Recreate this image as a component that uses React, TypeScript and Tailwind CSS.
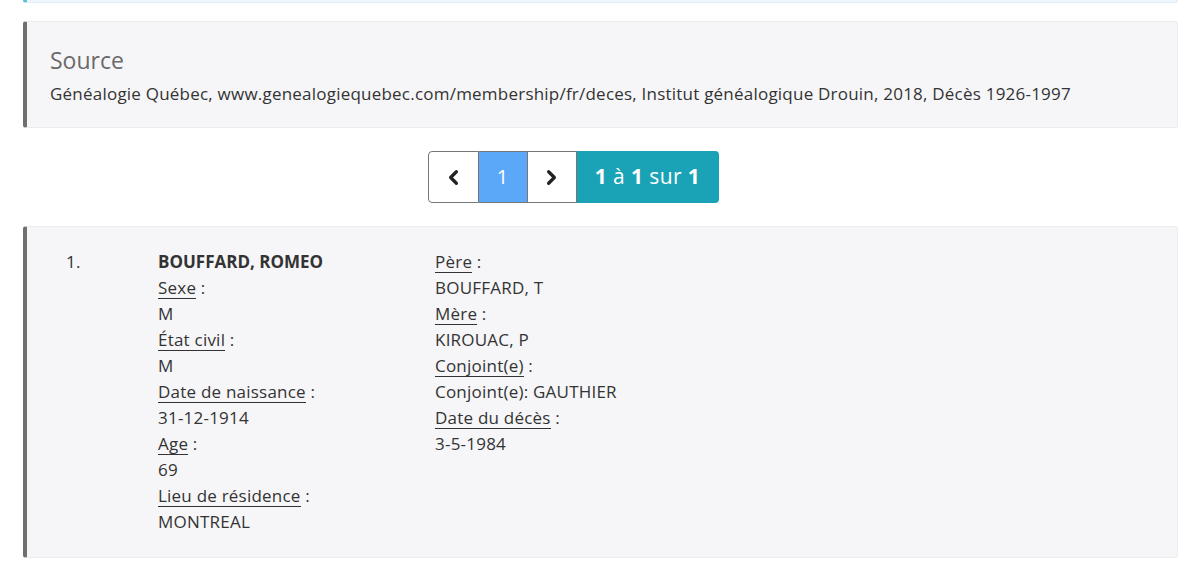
import { ChevronLeft, ChevronRight } from "lucide-react";

type Field = { label: string; value: string };

const leftFields: Field[] = [
  { label: "Sexe", value: "M" },
  { label: "État civil", value: "M" },
  { label: "Date de naissance", value: "31-12-1914" },
  { label: "Age", value: "69" },
  { label: "Lieu de résidence", value: "MONTREAL" },
];

const rightFields: Field[] = [
  { label: "Père", value: "BOUFFARD, T" },
  { label: "Mère", value: "KIROUAC, P" },
  { label: "Conjoint(e)", value: "Conjoint(e): GAUTHIER" },
  { label: "Date du décès", value: "3-5-1984" },
];

function FieldList({ fields }: { fields: Field[] }) {
  return (
    <>
      {fields.map((f) => (
        <div key={f.label}>
          <div>
            <abbr className="no-underline border-b border-[#333] leading-[21px] inline-block">{f.label}</abbr> :
          </div>
          <div>{f.value}</div>
        </div>
      ))}
    </>
  );
}

export default function App() {
  return (
    <div className="bg-white min-h-[563px] font-['Open_Sans',sans-serif] text-[17px] tracking-[0.22px] text-[#333] overflow-hidden">
      <div className="mx-[23px] w-[1155px]">
        {/* previous notice, cut off above */}
        <div className="h-[4px] -mt-px bg-[#eef6fb] border-l-4 border-[#5bc0de] border-b border-r border-b-[#e1eef6] border-r-[#e1eef6] rounded-b-[3px]" />

        <div className="mt-[18px] bg-[#f6f6f8] border border-[#ececee] border-l-4 border-l-[#6f6f6f] rounded-[3px] pl-[23px] pt-[24px] pb-[21px]">
          <h4 className="text-[23px] leading-[29px] tracking-normal text-[#6a6a6a] mb-[6px]">Source</h4>
          <p className="leading-[25px]">
            Généalogie Québec, www.genealogiequebec.com/membership/fr/deces, Institut généalogique Drouin, 2018, Décès 1926-1997
          </p>
        </div>

        <div className="flex justify-center mt-[23px] pr-[55px]">
          <div className="flex h-[52px]">
            <button className="w-[51px] flex items-center justify-center bg-white border border-[#767676] rounded-l-[4px] text-[#222]">
              <ChevronLeft size={23} strokeWidth={3.4} />
            </button>
            <span className="w-[48px] flex items-center justify-center bg-[#5ca8f8] border-y border-[#767676] text-white text-[20px]">
              1
            </span>
            <button className="w-[50px] flex items-center justify-center bg-white border border-[#767676] text-[#222]">
              <ChevronRight size={23} strokeWidth={3.4} />
            </button>
            <span className="w-[142px] flex items-center justify-center bg-[#1aa3b6] rounded-r-[4px] text-white text-[21px] tracking-[0.4px]">
              <b className="font-bold">1</b>&nbsp;à&nbsp;<b className="font-bold">1</b>&nbsp;sur&nbsp;<b className="font-bold">1</b>
            </span>
          </div>
        </div>

        <div className="mt-[23px] bg-[#f6f6f8] border border-[#ececee] border-l-4 border-l-[#6f6f6f] rounded-[3px] pt-[22px] pb-[22px] leading-[26px]">
          <div className="flex">
            <div className="w-[131px] pl-[39px]">1.</div>
            <div className="w-[277px]">
              <div className="font-bold tracking-normal">BOUFFARD, ROMEO</div>
              <FieldList fields={leftFields} />
            </div>
            <div>
              <FieldList fields={rightFields} />
            </div>
          </div>
        </div>
      </div>
    </div>
  );
}
